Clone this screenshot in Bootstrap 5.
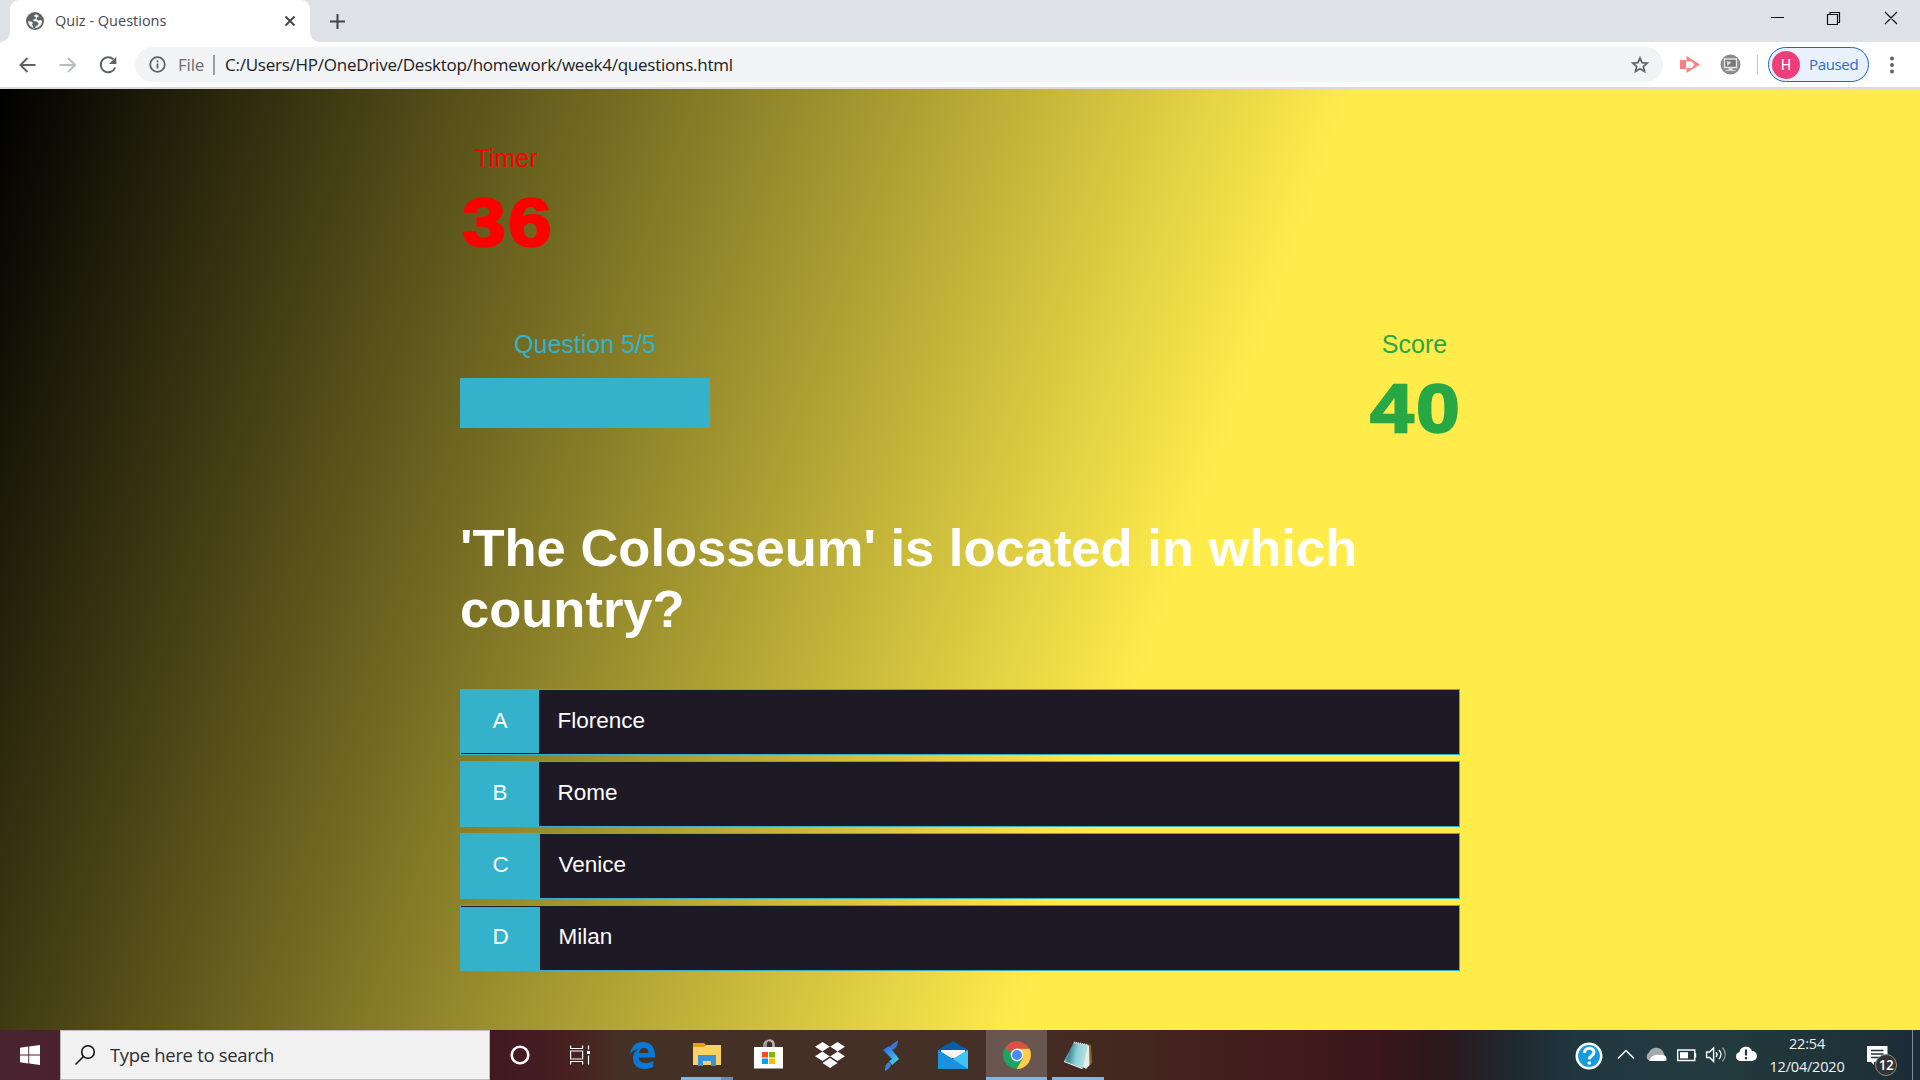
<!DOCTYPE html>
<html lang="en">
<head>
<meta charset="utf-8">
<meta name="viewport" content="width=device-width, initial-scale=1">
<title>Quiz - Questions</title>
<link href="https://cdn.jsdelivr.net/npm/bootstrap@5.3.0/dist/css/bootstrap.min.css" rel="stylesheet">
<style>
body{width:1920px;height:1080px;overflow:hidden;font-family:"Liberation Sans",Arial,sans-serif;line-height:1.15}
svg{display:block;flex:none;overflow:visible}
.seg{font-family:"Open Sans","Noto Sans",sans-serif;white-space:nowrap}
/* browser */
.tabstrip{height:42px;background:#dee1e6}
.tab-item{width:300px;margin-left:10px;height:42px;background:#fff;border-radius:9px 9px 0 0;padding-left:16px;position:relative}
.tab-item::before,.tab-item::after{content:"";position:absolute;bottom:0;width:10px;height:10px}
.tab-item::before{left:-10px;background:radial-gradient(circle at 0 0,#dee1e6 9.5px,#fff 10px)}
.tab-item::after{right:-10px;background:radial-gradient(circle at 100% 0,#dee1e6 9.5px,#fff 10px)}
.tab-title{font-size:14.5px;color:#45494d;margin-left:11px;width:229px;letter-spacing:0}
.new-tab{margin-left:20px}
.win-controls{height:36px}
.toolbar{height:47px;background:#fff;border-bottom:2px solid #d8dadd}
.omnibox{width:1528px;height:35px;background:#f1f3f4;border-radius:18px;padding:0 14px}
.url-file{color:#6a6e72;font-size:17px;margin-left:12px;width:35px;letter-spacing:-.2px}
.url-sep{width:2px;height:20px;background:#9a9da1}
.url-text{color:#202124;font-size:17px;margin-left:10px;letter-spacing:-.24px}
.extensions{margin-left:17px}
.tool-divider{width:1px;height:20px;background:#c6c8ca;margin:0 10px 0 17px}
.profile{width:101px;height:35px;border:1.5px solid #1a66d0;border-radius:18px;background:#e9f1fd;padding-left:3px;color:#2c6bc6;font-size:15px}
.profile-name{margin-left:9px;letter-spacing:-.35px}
.avatar{width:28px;height:28px;border-radius:50%;background:#ec3e78;color:#fff;font:14px Roboto,sans-serif}
.kebab{margin-left:21px}
/* quiz */
.quiz{height:941px;background:linear-gradient(109.6deg,#000 0%,#ffec4b 60%)}
.quiz-inner{width:1000px;padding-top:55px}
.hud{font-size:25px;line-height:29px;text-align:center}
.hud-num{font-size:69px;line-height:80px;font-weight:700;width:93px;margin-top:10px;letter-spacing:2.5px}
.hud-num span{display:inline-block;transform:translateX(1.5px) scaleX(1.13);-webkit-text-stroke:2.3px currentColor}
.timer{color:red;width:92px}
.score{color:#28a745;width:93px;padding-left:2px}
.score .hud-num{margin-left:-1px}
.asked{color:#34b1cb;width:250px}
.meter{height:50px;background:#34b1cb;margin-top:19px}
.hud-row{margin-top:67px;height:187px}
.question{font-size:52.5px;line-height:61px;font-weight:700;color:#fff;margin:0 0 50px}
.choice{height:66px;background:#1e1a25;border:1px solid #34b1cb;color:#fff;font-size:22.5px;margin-bottom:6px}
.choice b{font-weight:400;width:78px;height:64px;background:#34b1cb;padding-bottom:2px}
.choice:nth-of-type(1) b{height:63px;padding-bottom:1px}
.choice:nth-of-type(n+3) b{width:79px}
.choice:nth-of-type(4) b{height:63px;align-self:flex-end;padding-bottom:3px}
.choice span{padding:0 0 2px 18.5px}
/* taskbar */
.taskbar{height:50px;background:linear-gradient(90deg,#4b2431 0,#4a222f 60px,#401822 490px,#48201f 570px,#453026 620px,#453028 980px,#42281f 1130px,#43201e 1200px,#411a1b 1300px,#38161a 1380px,#2a181c 1440px,#20282f 1510px,#213740 1580px,#233b40 1700px,#20353a 1800px,#1d2c37 1920px)}
.find{width:430px;background:#f1f1f1;border:1px solid #bdbdbd;padding-left:14px}
.find span{font-size:18.5px;color:#2f2f2f;margin-left:15px;letter-spacing:-.33px}
.slot{width:61.5px;height:50px;position:relative;display:flex;align-items:center;justify-content:center}
.slot.open::after{content:"";position:absolute;bottom:0;left:5px;right:5px;height:3px;background:#76b9f3}
.slot.multi::after{background:linear-gradient(90deg,#76b9ed 40px,#5f91be 40px)}
.slot.now{background:#69564f;width:61px;margin-left:2.5px}
.slot.now::after{left:0;right:0}
.slot-start,.slot-cortana{width:60px}
.slot-views{width:59px}
.slot-edge{width:67px}
.tray{margin-left:461.5px;color:#fff}
.clock{width:100px;font-size:14.5px;line-height:23px;letter-spacing:-.2px;text-align:center;color:#f0f3f4;margin-left:-3px}
.notices{margin-left:10px}
.count{position:absolute;left:8px;top:8px;width:22px;height:22px;border-radius:50%;background:#333;border:1px solid #89908f;font-size:13.5px;line-height:20px;text-align:center;font-weight:600;letter-spacing:-.5px}
.peek{width:1px;height:50px;background:#7f8b90;margin-left:24px}
</style>
</head>
<body>
<header>
  <div class="tabstrip d-flex">
    <div class="tab-item d-flex align-items-center">
      <svg width="18" height="18" viewBox="0 0 18 18"><circle cx="9" cy="9" r="9" fill="#5f6368"/><path d="M10.500 2.200C8.500 3 7.800 3.600 8 4.500l2 .5-.3 1.800-2.500.9.300 1.500 3.200.2 1.800 2-.8 1.800-2 .8-.6 2-2 .3-.2-2.500-1-1.300 1.200-1.500-2-1.600-3.100-.1A7.300 7.300 0 0 0 9 16.200 7.200 7.200 0 0 0 16.200 9l-1.700-1-2 .6-2-1.300.6-2 2-1z" fill="#fff" fill-opacity=".92"/></svg>
      <span class="seg tab-title">Quiz - Questions</span>
      <svg width="12" height="12" viewBox="0 0 12 12" stroke="#45494d" stroke-width="2"><path d="M1.500 1.500l9 9M10.500 1.500l-9 9"/></svg>
    </div>
    <svg class="new-tab align-self-center" width="15" height="15" viewBox="0 0 15 15" stroke="#3f4347" stroke-width="2"><path d="M7.500 0v15M0 7.500h15"/></svg>
    <div class="win-controls ms-auto d-flex align-items-center">
      <svg width="149" height="14" viewBox="0 0 149 14" fill="none" stroke="#111" stroke-width="1.200"><path d="M0 6.500h13M56.500 3.500h10v10h-10zM59 3.500v-2h9.500v10H67M114 1l12 12M126 1l-12 12"/></svg>
    </div>
  </div>
  <div class="toolbar d-flex align-items-center">
    <svg width="135" height="20" viewBox="0 0 135 20" fill="none" stroke="#5f6368" stroke-width="2"><path d="M35.500 10H21M27.500 3l-7 7 7 7"/><path stroke="#babcbe" d="M59.500 10H74M68 3l7 7-7 7"/><path d="M115.200 12.500a7.500 7.500 0 1 1-1.800-8.200"/><path fill="#5f6368" stroke="none" d="M116.300 1.700v7.400H109z"/></svg>
    <div class="omnibox d-flex align-items-center">
      <svg width="17" height="17" viewBox="0 0 17 17" fill="none" stroke="#5f6368" stroke-width="1.800"><circle cx="8.500" cy="8.500" r="7.300"/><path d="M8.500 7.500v5M8.500 4.300v2"/></svg>
      <span class="seg url-file">File</span><i class="url-sep"></i>
      <span class="seg url-text">C:/Users/HP/OneDrive/Desktop/homework/week4/questions.html</span>
      <svg class="ms-auto" width="18" height="17" viewBox="0 0 18 17" fill="none" stroke="#5f6368" stroke-width="1.700"><path d="M9 1.900l2.100 4.700 5.100.5-3.900 3.400 1.200 5L9 12.800l-4.500 2.700 1.200-5L1.800 7.100l5.100-.5z"/></svg>
    </div>
    <svg class="extensions" width="60" height="21" viewBox="0 0 60 21"><path d="M0 6h5v9H0zM6.500 2L20 10.500 6.500 19z" fill="#fb8080"/><path d="M5 7.500h6.500l3 3-3 3.500H5z" fill="#fff"/><path d="M0 6h6v9H0z" fill="#fb8080"/><circle cx="50.500" cy="10.500" r="10" fill="#8b8b8b"/><path d="M44.500 5h12v8.500h-12z" fill="#777" stroke="#e4e4e4" stroke-width="1.400"/><path d="M48.500 14h4v2h3v1h-10v-1h3zM46.500 7l5 1-4 4z" fill="#ddd"/></svg>
    <i class="tool-divider"></i>
    <div class="profile seg d-flex align-items-center"><span class="avatar d-flex align-items-center justify-content-center">H</span><span class="profile-name">Paused</span></div>
    <svg class="kebab" width="4" height="18" viewBox="0 0 4 18" fill="#5f6368"><circle cx="2" cy="2.500" r="2"/><circle cx="2" cy="9" r="2"/><circle cx="2" cy="15.500" r="2"/></svg>
  </div>
</header>
<main class="quiz">
  <div class="quiz-inner mx-auto">
    <div class="hud timer">Timer<div class="hud-num"><span>36</span></div></div>
    <div class="hud-row d-flex justify-content-between">
      <div class="hud asked">Question 5/5<div class="meter"></div></div>
      <div class="hud score">Score<div class="hud-num"><span>40</span></div></div>
    </div>
    <h1 class="question">'The Colosseum' is located in which country?</h1>
    <section>
      <div class="choice d-flex"><b class="d-flex align-items-center justify-content-center">A</b><span class="align-self-center">Florence</span></div>
      <div class="choice d-flex"><b class="d-flex align-items-center justify-content-center">B</b><span class="align-self-center">Rome</span></div>
      <div class="choice d-flex"><b class="d-flex align-items-center justify-content-center">C</b><span class="align-self-center">Venice</span></div>
      <div class="choice d-flex"><b class="d-flex align-items-center justify-content-center">D</b><span class="align-self-center">Milan</span></div>
    </section>
  </div>
</main>
<footer class="taskbar d-flex">
  <div class="slot slot-start"><svg width="20" height="20" viewBox="0 0 20 20" fill="#fff"><path d="M0 2.800l8.300-1.200v8H0zM9.200 1.500L20 0v9.600H9.200zM0 10.500h8.300v8L0 17.300zM9.200 10.500H20V20L9.200 18.600z"/></svg></div>
  <div class="find d-flex align-items-center"><svg width="20" height="20" viewBox="0 0 20 20" fill="none" stroke="#111" stroke-width="1.600"><circle cx="13" cy="7" r="6.300"/><path d="M8.500 11.500L.5 19.500"/></svg><span class="seg">Type here to search</span></div>
  <div class="slot slot-cortana"><svg width="20" height="20"><circle cx="10" cy="10" r="8.300" fill="none" stroke="#fff" stroke-width="2.600"/></svg></div>
  <div class="slot slot-views"><svg width="20" height="20" viewBox="0 0 20 20" fill="none" stroke="#fff" stroke-width="1.200"><path d="M.6.500v3h12v-3M.6 19.500v-3h12v3M.6 6h12v8H.6zM18.500.5v4M18.500 10.500v9"/><path d="M17 6h3v3h-3z" fill="#fff" stroke="none"/></svg></div>
  <div class="slot slot-edge"><svg width="25" height="27" viewBox="0 0 25 27"><path d="M0 12.200C1 4.500 6 0 12.700 0 20.500 0 25 5.400 25 12.800v2.700H8.600c.2 4 3.400 5.700 7.200 5.700 2.800 0 5.200-.8 7.500-2.100v5.700c-2.700 1.500-5.700 2.200-9 2.200C7.400 27 3 22.800 3 16.500 3 11.900 5.300 8.700 9 6.600 5.200 7.200 2.100 9.300 0 12.200zM8.900 11h9.500c0-3-1.400-4.900-4.300-4.900-2.700 0-4.700 2-5.200 4.900z" fill="#0a78d7"/></svg></div>
  <div class="slot open multi"><svg width="28" height="24" viewBox="0 0 28 24"><path d="M0 1h11l2.500 3H0z" fill="#e3a20c"/><path d="M0 4h11l2-2h15v20H0z" fill="#fbd164"/><path d="M0 0h11l2 2-2 2H0z" fill="#e3a20c"/><path d="M5 23V12h18v11h-5v-5h-8v5z" fill="#3b92dc"/></svg></div>
  <div class="slot"><svg width="29" height="30" viewBox="0 0 29 30"><path d="M10 8V5a4.500 4.500 0 0 1 9 0v3M12 8V4.500a4 4 0 0 1 8-1V8" fill="none" stroke="#b9b3af" stroke-width="1.500"/><path d="M0 7h29v21.500H0z" fill="#fff"/><path d="M8 12h6v5.500H8z" fill="#f25022"/><path d="M15 12h6v5.500h-6z" fill="#7fba00"/><path d="M8 18.500h6V24H8z" fill="#00a4ef"/><path d="M15 18.500h6V24h-6z" fill="#ffb900"/></svg></div>
  <div class="slot"><svg width="30" height="27" viewBox="0 0 30 27" fill="#fff"><path d="M7.500 0L15 4.800 7.500 9.500 0 4.800zM22.500 0L30 4.800 22.500 9.500 15 4.800zM7.500 9.500l7.500 4.800L7.500 19 0 14.300zM22.500 9.500l7.500 4.800-7.500 4.700-7.500-4.700zM15 16l7.500 5-7.500 5-7.500-5z"/><path d="M15 4.800l7.500 4.700-7.500 4.800-7.500-4.800z" fill="#43302a"/></svg></div>
  <div class="slot"><svg width="16" height="31" viewBox="0 0 16 31"><defs><linearGradient id="sg" x1="0" y1="0" x2="1" y2="1"><stop stop-color="#2f62ee"/><stop offset="1" stop-color="#42e0e3"/></linearGradient></defs><path d="M15 0c0 4-1 7-4 9l-3 1.500L6 8c2-4 6-5 9-8z" fill="#3a78d2"/><path d="M0 10l6-4 10 13-7 6-3-4 3-2z" fill="url(#sg)"/><path d="M2 31c0-5 1-7 4-9l2 3c-1 3-3 4-6 6z" fill="#3b83d8"/></svg></div>
  <div class="slot"><svg width="30" height="28" viewBox="0 0 30 28"><path d="M0 9L15 0l15 9v5H0z" fill="#0a5ea8"/><path d="M3 9h24v8H3z" fill="#f5f5f5"/><path d="M0 9l15 9L30 9v19H0z" fill="#22a5e8"/><path d="M15 18L30 9v19z" fill="#41c5f5"/><path d="M0 28L0 9l30 19z" fill="#1a91df"/></svg></div>
  <div class="slot now open"><svg width="28" height="28" viewBox="0 0 28 28"><path d="M14 14L1.900 7A14 14 0 0 0 14 28l6-10.500z" fill="#1da362"/><path d="M14 7.500h12.400A14 14 0 0 1 13.500 28l6.200-10.500z" fill="#ffcd46"/><path d="M1.900 7A14 14 0 0 1 26.100 7.500H14L7.500 14z" fill="#dd5144"/><path d="M1.900 7l6.200 10.500L12 14z" fill="#1da362"/><circle cx="14" cy="14" r="6.400" fill="#f1f1f1"/><circle cx="14" cy="14" r="5" fill="#4c8bf5"/></svg></div>
  <div class="slot open"><svg width="28" height="28" viewBox="0 0 28 28"><defs><linearGradient id="ng" x2="1" y2=".2"><stop stop-color="#a9d3d8"/><stop offset=".3" stop-color="#3d8b9b"/><stop offset=".6" stop-color="#8fd0d8"/><stop offset="1" stop-color="#b5dfe2"/></linearGradient></defs><path d="M22 3l5 1 1 18-4 4z" fill="#8a6531"/><path d="M22 3l3 2 .5 19-3.500 4-5-3z" fill="#e6eeec"/><path d="M10 1L24 4 19 27 0 20z" fill="url(#ng)"/><path d="M0 20l19 7-1 1L0 21z" fill="#f1fbfb"/><path d="M10 1.500l14 2.500" stroke="#ddd" stroke-width="2" stroke-dasharray="1 1"/></svg></div>
  <div class="tray d-flex align-items-center">
    <svg width="190" height="34" viewBox="1571 1038.500 190 34" fill="none" stroke="#fff" stroke-width="1.400"><circle cx="1590" cy="1056.500" r="12.200" fill="#169bdd" stroke-width="2.600"/><path d="M1585.500 1053.500c0-6.500 9.500-6 9.500-.8 0 3.600-4.700 3.400-4.700 7" stroke-width="3"/><circle cx="1590.300" cy="1063.500" r="1.800" fill="#fff" stroke="none"/><path d="M1619 1059l8-8 8 8"/><path d="M1650 1061a4.500 4.500 0 0 1 0-8 8 8 0 0 1 14-1l4 9z" fill="#a4aaab" stroke="none"/><path d="M1650 1061.500a9 9 0 0 1 11-6 6 6 0 0 1 4 .5 3 3 0 0 1 1 5.500z" fill="#fff" stroke="none"/><path d="M1678.700 1050.500h17V1061h-17zM1696.500 1053.500v4.500"/><path d="M1681 1052.700h8v6.200h-8z" fill="#fff" stroke="none"/><path d="M1707.600 1052.500h3l4-4v13.500l-4-4h-3zM1717 1052.500q2 2.500 0 5M1720 1050.500q4 4.500 0 9"/><path d="M1723.500 1048q5.500 7 0 14" stroke="#8d9899"/><path d="M1741 1061.500a4.600 4.600 0 0 1-.5-9 6.500 6.500 0 0 1 12.500-1 5 5 0 0 1 0 10z" fill="#fff" stroke="none"/><path d="M1747 1050v6M1747 1057.500v2.300" stroke="#21383e" stroke-width="2.200"/></svg>
    <div class="clock seg">22:54<br>12/04/2020</div>
    <div class="notices seg position-relative"><svg width="21" height="19" viewBox="0 0 21 19"><path d="M0 0h20.500v16H7v3l-3-3H0z" fill="#fff"/><path d="M4 4.500h12.500M4 8h12.500M4 11.500h8" stroke="#20343a" stroke-width="1.300"/></svg><div class="count">12</div></div>
    <i class="peek"></i>
  </div>
</footer>
<script src="https://cdn.jsdelivr.net/npm/bootstrap@5.3.0/dist/js/bootstrap.bundle.min.js"></script>
</body>
</html>
